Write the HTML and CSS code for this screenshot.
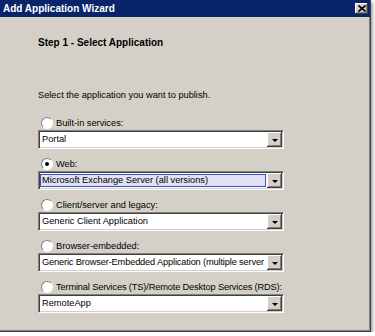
FILE: index.html
```html
<!DOCTYPE html>
<html lang="en">
<head>
  <meta charset="UTF-8" />
  <title>Add Application Wizard</title>
  <link rel="stylesheet" href="styles.css">
</head>
<body>

<div class="window">
  <div class="titlebar">
    <span class="title">Add Application Wizard</span>
    <span class="close">
      <svg width="8" height="7" viewBox="0 0 8 7"><path d="M0.5 0.5 L7.5 6.5 M7.5 0.5 L0.5 6.5" stroke="#000" stroke-width="1.6" fill="none"/></svg>
    </span>
  </div>

  <div class="content">
    <h1 class="step">Step 1 - Select Application</h1>
    <p class="intro">Select the application you want to publish.</p>

    <div class="group">
      <div class="option"><span class="radio"></span>Built-in services:</div>
      <div class="combo"><span class="value">Portal</span><span class="drop"></span></div>
    </div>

    <div class="group">
      <div class="option"><span class="radio checked"></span>Web:</div>
      <div class="combo"><span class="value selected">Microsoft Exchange Server (all versions)</span><span class="drop"></span></div>
    </div>

    <div class="group">
      <div class="option"><span class="radio"></span>Client/server and legacy:</div>
      <div class="combo"><span class="value">Generic Client Application</span><span class="drop"></span></div>
    </div>

    <div class="group">
      <div class="option"><span class="radio"></span>Browser-embedded:</div>
      <div class="combo"><span class="value tight">Generic Browser-Embedded Application (multiple server</span><span class="drop"></span></div>
    </div>

    <div class="group">
      <div class="option tight"><span class="radio"></span>Terminal Services (TS)/Remote Desktop Services (RDS):</div>
      <div class="combo"><span class="value">RemoteApp</span><span class="drop"></span></div>
    </div>
  </div>
</div>

</body>
</html>
```

FILE: styles.css
```css
body {
  margin: 0;
  background: #fff;
  font-family: "Liberation Sans", Arial, sans-serif;
  font-size: 9.25px;
  color: #000;
}
.window {
  width: 370px;
  height: 331px;
  background: #d4d0c8;
  border-right: 1px solid #404040;
  border-bottom: 1px solid #404040;
  box-shadow: inset -1px -1px #808080, 2px 2px 3px rgba(0, 0, 0, 0.35);
}
.titlebar {
  height: 17px;
  background: #0a246a;
  display: flex;
  align-items: center;
  justify-content: space-between;
  padding: 0 2px 0 3px;
}
.title {
  color: #fff;
  font-weight: bold;
  font-size: 10px;
}
.close {
  width: 13px;
  height: 11px;
  background: #d4d0c8;
  display: flex;
  align-items: center;
  justify-content: center;
  box-shadow: inset -1px -1px #404040, inset 1px 1px #fff, inset -2px -2px #808080;
}
.content {
  padding: 19px 0 0 38px;
}
.step {
  margin: 0;
  font-size: 10px;
  font-weight: bold;
  line-height: 14px;
}
.intro {
  margin: 38px 0 13px;
  line-height: 14px;
}
.group {
  margin-bottom: 7px;
}
.option {
  display: flex;
  align-items: center;
  height: 15px;
  padding-left: 3px;
}
.tight {
  letter-spacing: -0.15px;
}
.radio {
  width: 10px;
  height: 10px;
  border-radius: 50%;
  background: #fff;
  border: 1px solid;
  border-color: #808080 #fff #fff #808080;
  margin-right: 3px;
  display: flex;
  align-items: center;
  justify-content: center;
}
.radio.checked::after {
  content: "";
  width: 4px;
  height: 4px;
  border-radius: 50%;
  background: #000;
}
.combo {
  width: 242px;
  height: 15px;
  display: flex;
  align-items: center;
  background: #fff;
  border: 1px solid;
  border-color: #808080 #fff #fff #808080;
  box-shadow: inset 1px 1px #404040, inset -1px -1px #d4d0c8;
  padding: 1px;
  overflow: hidden;
}
.value {
  flex: 1;
  height: 13px;
  line-height: 13px;
  padding-left: 2px;
  white-space: nowrap;
  overflow: hidden;
}
.value.selected {
  background: #e2e2f6;
  outline: 1px solid #3c50c8;
  outline-offset: -1px;
  margin-right: 1px;
}
.drop {
  width: 15px;
  height: 15px;
  background: #d4d0c8;
  box-shadow: inset -1px -1px #404040, inset 1px 1px #fff, inset -2px -2px #808080;
  display: flex;
  align-items: center;
  justify-content: center;
}
.drop::after {
  content: "";
  border-left: 3px solid transparent;
  border-right: 3px solid transparent;
  border-top: 3px solid #000;
  margin-top: 1px;
}
```
